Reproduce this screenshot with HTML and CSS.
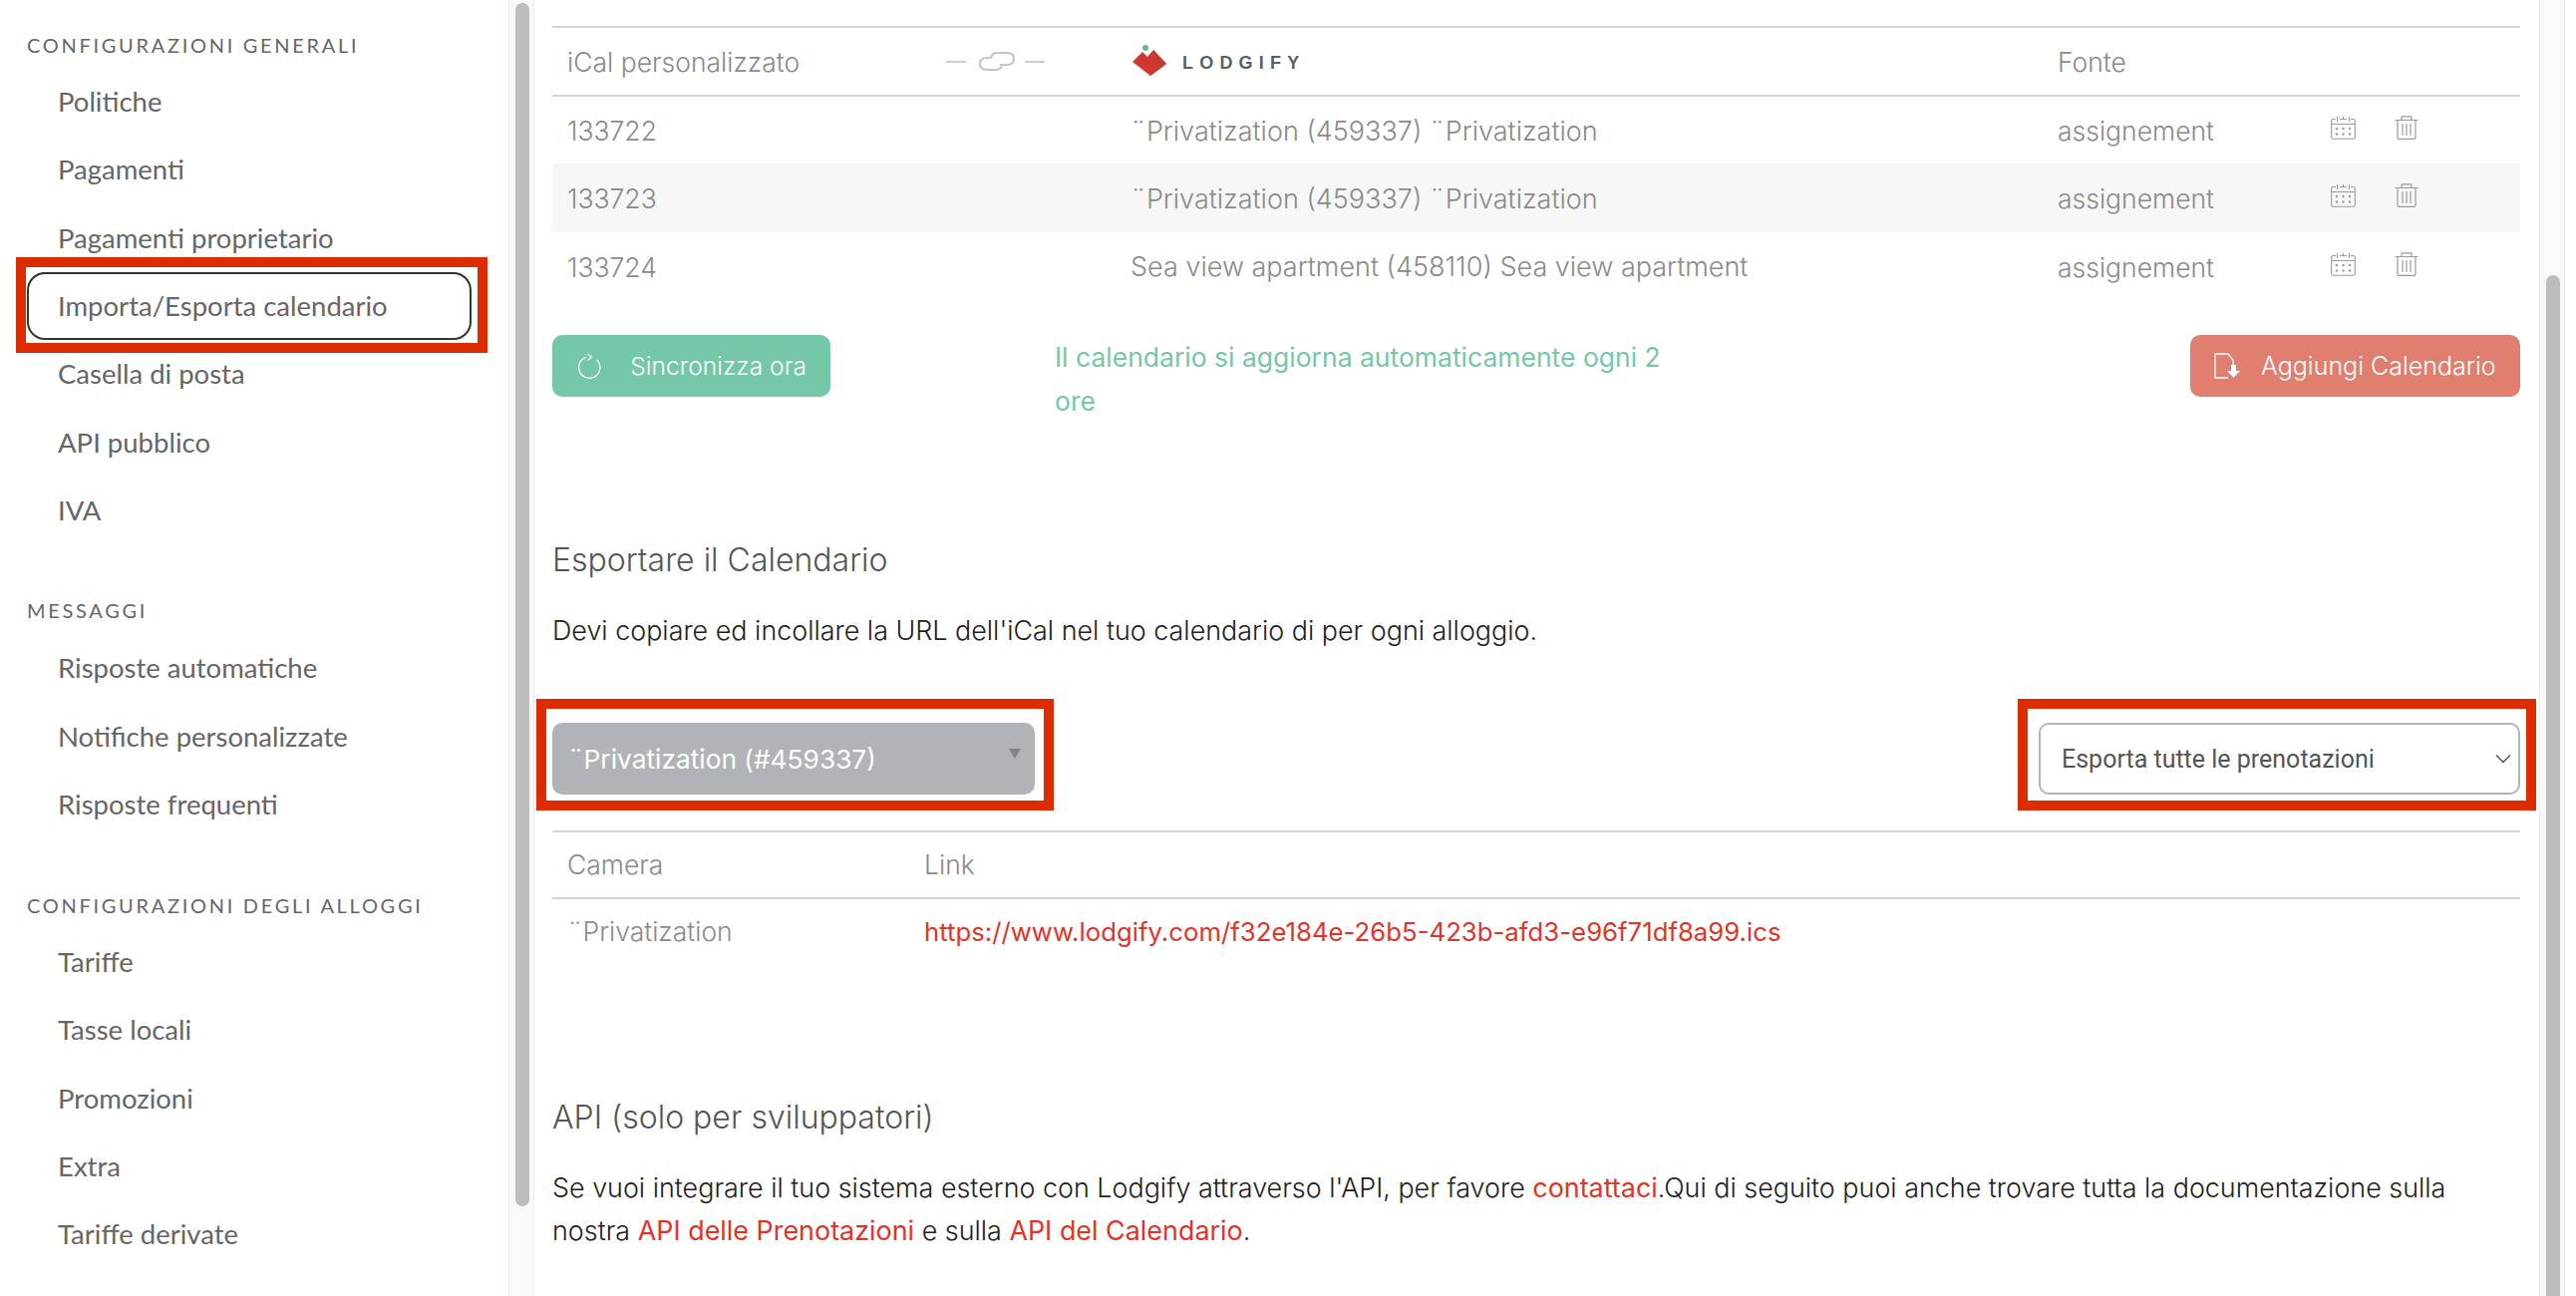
FILE: index.html
```html
<!DOCTYPE html>
<html lang="en">
<head>
    <meta charset="UTF-8">
    <title>Importa/Esporta calendario</title>
    <link rel="stylesheet" href="styles.css">
</head>
<body>
    <svg class="icon-defs" width="0" height="0">
        <symbol id="icon-cal" viewBox="0 0 25 24">
            <path d="M5 3.500H2.500Q.7 3.500 .7 5.300V21.500Q.7 23.300 2.500 23.300H22.500Q24.300 23.300 24.300 21.500V5.300Q24.300 3.500 22.500 3.500H20M9 3.500h7M.7 8.500H24.300M6.500 1v5M18.500 1v5M12.500 1v2" fill="none" stroke="currentColor" stroke-width="1.100"/>
            <g fill="currentColor">
                <circle cx="6" cy="13" r="1.200"/><circle cx="12.500" cy="13" r="1.200"/><circle cx="19" cy="13" r="1.200"/>
                <circle cx="6" cy="18.500" r="1.200"/><circle cx="12.500" cy="18.500" r="1.200"/><circle cx="19" cy="18.500" r="1.200"/>
            </g>
        </symbol>
        <symbol id="icon-trash" viewBox="0 0 24 24">
            <path d="M.5 4.500H23.500M7 4.500V1.500Q7 .8 7.800 .8H16.200Q17 .8 17 1.500V4.500M3 4.500V22Q3 23.300 4.300 23.300H19.700Q21 23.300 21 22V4.500M8 8V20M12 8V20M16 8V20" fill="none" stroke="currentColor" stroke-width="1.200"/>
        </symbol>
    </svg>

    <div class="layout">
        <!-- Sidebar -->
        <nav class="sidebar">
            <div class="nav-title">CONFIGURAZIONI GENERALI</div>
            <a class="nav-item">Politiche</a>
            <a class="nav-item">Pagamenti</a>
            <a class="nav-item">Pagamenti proprietario</a>
            <a class="nav-item active">Importa/Esporta calendario</a>
            <a class="nav-item">Casella di posta</a>
            <a class="nav-item">API pubblico</a>
            <a class="nav-item">IVA</a>

            <div class="nav-title nav-title-messages">MESSAGGI</div>
            <a class="nav-item">Risposte automatiche</a>
            <a class="nav-item">Notifiche personalizzate</a>
            <a class="nav-item">Risposte frequenti</a>

            <div class="nav-title nav-title-rooms">CONFIGURAZIONI DEGLI ALLOGGI</div>
            <a class="nav-item">Tariffe</a>
            <a class="nav-item">Tasse locali</a>
            <a class="nav-item">Promozioni</a>
            <a class="nav-item">Extra</a>
            <a class="nav-item">Tariffe derivate</a>
        </nav>
        <div class="scrollbar"><div class="thumb thumb-side"></div></div>

        <!-- Main content -->
        <main class="content">
            <table class="sync-table">
                <tr class="head-row">
                    <td class="col-ical">iCal personalizzato</td>
                    <td class="col-link">
                        <svg class="chain" width="100" height="24" viewBox="0 0 100 24">
                            <path d="M0 12H20M79 12H99" stroke="#ccc" stroke-width="2"/>
                            <path d="M44 8H41Q34 8 34 14T41 20H50Q56 20 56 14" fill="none" stroke="#c4c4c4" stroke-width="2"/>
                            <path d="M54 15H61Q68 15 68 9T61 3H51Q45 3 45 9" fill="none" stroke="#c4c4c4" stroke-width="2"/>
                        </svg>
                    </td>
                    <td class="col-source">
                        <div class="logo">
                            <svg width="34" height="32" viewBox="0 0 34 32">
                                <circle cx="13" cy="3" r="3" fill="#6bb48a"/>
                                <path d="M0 17L10 7L15 12L21 5L34 19L18 31Z" fill="#d1372e"/>
                                <path d="M18 31L34 19L21 5L24 18Z" fill="#c23a32"/>
                            </svg>
                            <span class="logo-text">LODGIFY</span>
                        </div>
                    </td>
                    <td class="col-type">Fonte</td>
                    <td class="col-actions"></td>
                </tr>
                <tr>
                    <td colspan="2">133722</td>
                    <td class="cell-source">¨Privatization (459337) ¨Privatization</td>
                    <td>assignement</td>
                    <td class="actions">
                        <svg class="cal"><use href="#icon-cal"/></svg>
                        <svg class="trash"><use href="#icon-trash"/></svg>
                    </td>
                </tr>
                <tr class="striped">
                    <td colspan="2">133723</td>
                    <td class="cell-source">¨Privatization (459337) ¨Privatization</td>
                    <td>assignement</td>
                    <td class="actions">
                        <svg class="cal"><use href="#icon-cal"/></svg>
                        <svg class="trash"><use href="#icon-trash"/></svg>
                    </td>
                </tr>
                <tr>
                    <td colspan="2">133724</td>
                    <td class="cell-source">Sea view apartment (458110) Sea view apartment</td>
                    <td>assignement</td>
                    <td class="actions">
                        <svg class="cal"><use href="#icon-cal"/></svg>
                        <svg class="trash"><use href="#icon-trash"/></svg>
                    </td>
                </tr>
            </table>

            <div class="sync-bar">
                <button class="btn btn-green">
                    <svg width="26" height="28" viewBox="0 0 26 28">
                        <path d="M15 5A11 11 0 1 0 24 12" transform="rotate(-25 13 16)" fill="none" stroke="#fff" stroke-width="1.300"/>
                        <path d="M12 2L16 5L12 8" fill="none" stroke="#fff" stroke-width="1.300"/>
                    </svg>
                    Sincronizza ora
                </button>
                <p class="sync-note">Il calendario si aggiorna automaticamente ogni 2 ore</p>
                <button class="btn btn-red">
                    <svg width="26" height="26" viewBox="0 0 26 26">
                        <path d="M14 25H1V1H14L19 7V12" fill="none" stroke="#fff" stroke-width="1.300"/>
                        <path d="M17 12H22V18H26L19.500 25L13 18H17Z" fill="#fff"/>
                    </svg>
                    Aggiungi Calendario
                </button>
            </div>

            <h2 class="section-title title-export">Esportare il Calendario</h2>
            <p class="section-text">Devi copiare ed incollare la URL dell'iCal nel tuo calendario di per ogni alloggio.</p>

            <div class="filter-bar">
                <div class="marked marked-left">
                    <div class="room-select">
                        <span>¨Privatization (#459337)</span>
                        <i class="caret"></i>
                    </div>
                </div>
                <div class="marked marked-right">
                    <div class="export-select">
                        <span>Esporta tutte le prenotazioni</span>
                        <svg width="16" height="10" viewBox="0 0 16 10"><path d="M1 1.500L8 8.500L15 1.500" fill="none" stroke="#555" stroke-width="1.500"/></svg>
                    </div>
                </div>
            </div>

            <table class="link-table">
                <tr class="head-row">
                    <td class="col-room">Camera</td>
                    <td>Link</td>
                </tr>
                <tr>
                    <td>¨Privatization</td>
                    <td><a class="red-link ics-link">https://www.lodgify.com/f32e184e-26b5-423b-afd3-e96f71df8a99.ics</a></td>
                </tr>
            </table>

            <h2 class="section-title title-api">API (solo per sviluppatori)</h2>
            <p class="section-text api-text">Se vuoi integrare il tuo sistema esterno con Lodgify attraverso l'API, per favore <a class="red-link">contattaci</a>.Qui di seguito puoi anche trovare tutta la documentazione sulla nostra <a class="red-link">API delle Prenotazioni</a> e sulla <a class="red-link">API del Calendario</a>.</p>
        </main>
        <div class="scrollbar scrollbar-main"><div class="thumb thumb-main"></div></div>
    </div>
</body>
</html>
```

FILE: styles.css
```css
*, *::after {
    box-sizing: border-box;
}

body {
    margin: 0;
    background: #fff;
    font-family: 'Inter', sans-serif;
    font-weight: 300;
    color: #8a8a8a;
    overflow: hidden;
}

.icon-defs {
    position: absolute;
}

.layout {
    display: flex;
    height: 1300px;
    overflow: hidden;
}

/* Sidebar */
.sidebar {
    width: 510px;
    flex: none;
    padding: 0 0 0 27px;
    font-family: 'Lato', sans-serif;
    font-weight: 400;
    color: #666;
}

.nav-title {
    height: 24px;
    margin-top: 33px;
    margin-bottom: 11px;
    font-size: 20px;
    line-height: 24px;
    letter-spacing: 2.700px;
    color: #666;
}

.nav-title-messages {
    margin-top: 54px;
    margin-bottom: 12px;
}

.nav-title-rooms {
    margin-top: 55px;
    margin-bottom: 11px;
}

.nav-item {
    display: flex;
    align-items: center;
    width: 446px;
    height: 68.300px;
    padding-left: 31px;
    padding-bottom: 1px;
    font-size: 27.500px;
}

.nav-item.active {
    position: relative;
    border: 2px solid #333;
    border-radius: 18px;
    padding-left: 29px;
}

.nav-item.active::after {
    content: "";
    position: absolute;
    left: -13px;
    top: -17px;
    width: 473px;
    height: 96px;
    border: 10px solid #dd2c00;
}

/* Scrollbars */
.scrollbar {
    width: 26px;
    flex: none;
    padding: 3px 6px 0;
    background: #f9f9f9;
    border-left: 1px solid #eee;
    border-right: 1px solid #eee;
}

.scrollbar-main {
    margin-right: 11px;
}

.thumb {
    width: 14px;
    background: #bdbdbd;
    border-radius: 7px;
}

.thumb-side {
    height: 1207px;
}

.thumb-main {
    height: 1100px;
    margin-top: 273px;
    border-radius: 7px 7px 0 0;
}

/* Main column */
.content {
    flex: 1;
    min-width: 0;
    padding: 26px 19px 0 18px;
    font-size: 26.500px;
}

table {
    width: 100%;
    border-collapse: collapse;
    table-layout: fixed;
}

td {
    height: 68.500px;
    padding: 2px 0 0 15px;
    white-space: nowrap;
}

.head-row td {
    border-top: 2px solid #d4d4d4;
    border-bottom: 2px solid #d4d4d4;
}

.striped td {
    background: #f7f7f7;
}

.col-ical {
    width: 390px;
}

.col-link {
    width: 175px;
    padding-left: 0;
    padding-top: 2px;
}

.col-source {
    width: 930px;
}

.cell-source {
    font-size: 27px;
}

.col-type {
    width: 276px;
}

.chain {
    display: block;
    margin-left: 5px;
}

.logo {
    display: flex;
    align-items: center;
    gap: 16px;
    margin-left: 2px;
    margin-top: -2px;
}

.logo-text {
    margin-top: 4px;
    font-family: 'Liberation Sans', sans-serif;
    font-size: 18px;
    font-weight: 700;
    letter-spacing: 6.200px;
    color: #58606a;
}

.actions {
    padding-left: 13px;
}

.actions svg {
    display: inline-block;
    color: #9a9a9a;
    vertical-align: 1px;
    margin-top: -12px;
}

.cal {
    width: 25px;
    height: 24px;
    margin-right: 32px;
}

.trash {
    width: 24px;
    height: 24px;
}

/* Sync bar */
.sync-bar {
    display: flex;
    align-items: flex-start;
    margin-top: 35px;
}

.btn {
    display: flex;
    align-items: center;
    height: 62px;
    border: 0;
    border-radius: 10px;
    padding: 0 24px;
    font-family: inherit;
    font-size: 25px;
    font-weight: 300;
    color: #fff;
    white-space: nowrap;
}

.btn-green {
    width: 279px;
    gap: 29px;
    font-size: 24.600px;
    background: #74c7a7;
}

.btn-red {
    width: 331px;
    gap: 21px;
    padding-left: 24px;
    margin-left: auto;
    background: #e07f70;
}

.sync-note {
    width: 640px;
    margin: 0 0 0 225px;
    font-size: 26.500px;
    line-height: 44px;
    color: #74c7a7;
    font-weight: 400;
}

/* Sections */
.section-title {
    margin: 0;
    font-size: 32px;
    font-weight: 300;
    color: #555;
    line-height: 40px;
}

.title-export {
    margin-top: 118px;
}

.section-text {
    margin: 28px 0 0;
    font-size: 26.900px;
    line-height: 44px;
    font-weight: 300;
    color: #222;
}

/* Selects */
.filter-bar {
    display: flex;
    justify-content: space-between;
    margin-top: 71px;
}

.marked {
    position: relative;
}

.marked::after {
    content: "";
    position: absolute;
    top: -24px;
    bottom: -16px;
    border: 10px solid #dd2c00;
    pointer-events: none;
}

.marked-left::after {
    left: -16px;
    right: -19px;
}

.marked-right::after {
    left: -21px;
    right: -16px;
}

.room-select {
    display: flex;
    align-items: center;
    justify-content: space-between;
    width: 484px;
    height: 72px;
    padding: 0 14px 0 16px;
    border-radius: 10px;
    background: #b0b4b8;
    color: #fff;
    font-size: 26.300px;
    font-weight: 400;
}

.caret {
    width: 0;
    height: 0;
    margin-top: -10px;
    border-left: 6px solid transparent;
    border-right: 6px solid transparent;
    border-top: 10px solid #7f8488;
}

.export-select {
    display: flex;
    align-items: center;
    justify-content: space-between;
    width: 483px;
    height: 72px;
    padding: 0 7px 0 21px;
    border: 2px solid #b0b4b8;
    border-radius: 10px;
    font-family: 'Roboto', sans-serif;
    font-weight: 400;
    font-size: 25px;
    color: #555;
}

.link-table {
    margin-top: 36px;
}

.link-table td {
    height: 66.500px;
    padding-top: 0;
}

.col-room {
    width: 358px;
}

.red-link {
    color: #e0342a;
    font-weight: 400;
}

.ics-link {
    font-size: 25.750px;
}

.title-api {
    margin-top: 134px;
}

.api-text {
    margin-top: 29px;
    padding-right: 20px;
    line-height: 43px;
}
```
